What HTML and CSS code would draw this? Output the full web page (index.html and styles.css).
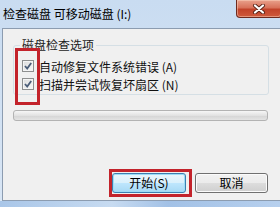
FILE: index.html
```html
<!DOCTYPE html>
<html lang="zh-CN">
<head>
<meta charset="utf-8">
<link rel="stylesheet" href="styles.css">
</head>
<body>
<div class="win">
  <div class="titlebar">
    <span class="title">检查磁盘 可移动磁盘 (I:)</span>
    <div class="close">
      <svg width="14" height="10" viewBox="0 0 14 10">
        <path d="M3 1.5 L11 8.5 M11 1.5 L3 8.5" stroke="#5a2418" stroke-width="4" stroke-linecap="round"/>
        <path d="M3 1.5 L11 8.5 M11 1.5 L3 8.5" stroke="#ffffff" stroke-width="2.2" stroke-linecap="round"/>
      </svg>
    </div>
  </div>
  <div class="client">
    <fieldset class="group">
      <legend class="legend">磁盘检查选项</legend>
      <label class="opt"><span class="cb"><svg width="10" height="10" viewBox="0 0 10 10"><path d="M2 5 L4.2 7.5 L8.2 2" fill="none" stroke="#4b5d78" stroke-width="1.8"/></svg></span>自动修复文件系统错误 (A)</label>
      <label class="opt"><span class="cb"><svg width="10" height="10" viewBox="0 0 10 10"><path d="M2 5 L4.2 7.5 L8.2 2" fill="none" stroke="#4b5d78" stroke-width="1.8"/></svg></span>扫描并尝试恢复坏扇区 (N)</label>
    </fieldset>
    <div class="progress"></div>
    <div class="buttons">
      <button class="btn btn-default">开始(S)</button>
      <button class="btn">取消</button>
    </div>
  </div>
  <div class="bottom"></div>
  <div class="mark mark-cb"></div>
  <div class="mark mark-btn"></div>
</div>
</body>
</html>
```

FILE: styles.css
```css
html, body {
  margin: 0;
  padding: 0;
}
body {
  font-family: "Noto Sans CJK SC", "Liberation Sans", sans-serif;
  font-size: 12px;
  color: #000;
}
.win {
  position: relative;
  width: 280px;
  height: 207px;
  overflow: hidden;
  background: linear-gradient(#c9dcf1, #d9e6f5);
}
.titlebar {
  height: 28px;
  display: flex;
  justify-content: space-between;
  align-items: flex-start;
}
.title {
  margin-left: 3px;
  line-height: 27px;
  font-size: 12px;
  white-space: pre;
}
.close {
  width: 46px;
  height: 18px;
  margin-right: -2px;
  box-sizing: border-box;
  border: 1px solid #6e2a1e;
  border-top: none;
  border-radius: 0 0 4px 4px;
  background: linear-gradient(#e9a18c 0%, #d8725a 45%, #c2432a 55%, #cf5a3c 100%);
  display: flex;
  align-items: center;
  justify-content: center;
  box-shadow: inset 0 0 0 1px rgba(255, 220, 200, 0.45);
}
.client {
  margin-left: 2px;
  height: 171px;
  border-top: 1px solid #8c9cb0;
  border-left: 1px solid #8c9cb0;
  border-bottom: 1px solid #8c9cb0;
  background: #f0f0f0;
  display: flex;
  flex-direction: column;
}
.group {
  margin: 8px 11px 0 10px;
  padding: 4px 8px 1px 8px;
  border: 1px solid #d5dfe5;
  border-radius: 3px;
  min-width: 0;
}
.legend {
  padding: 0 2px;
  margin-left: -2px;
  line-height: 16px;
  color: #1c1c1c;
}
.opt {
  display: flex;
  align-items: center;
  height: 18px;
  white-space: pre;
  color: #111;
}
.cb {
  width: 12px;
  height: 12px;
  box-sizing: border-box;
  border: 1px solid #8e8f8f;
  background: linear-gradient(135deg, #dcdcdc, #f8f8f8);
  margin-right: 5px;
  display: flex;
  align-items: center;
  justify-content: center;
  box-shadow: inset 0 0 0 1px #f4f4f4;
}
.progress {
  margin: 15px 12px 0 10px;
  height: 11px;
  box-sizing: border-box;
  border: 1px solid #b3b3b3;
  border-radius: 3px;
  background: linear-gradient(#f6f6f6, #e2e2e2 50%, #d4d4d4 51%, #e4e4e4);
}
.buttons {
  margin-top: 52px;
  margin-right: 12px;
  display: flex;
  justify-content: flex-end;
  gap: 9px;
}
.btn {
  width: 73px;
  height: 20px;
  padding: 0;
  font-family: "Noto Sans CJK SC", "Liberation Sans", sans-serif;
  font-size: 12px;
  line-height: 18px;
  color: #000;
  border: 1px solid #707070;
  border-radius: 3px;
  background: linear-gradient(#f2f2f2 0%, #ebebeb 50%, #dddddd 51%, #cfcfcf 100%);
  box-shadow: inset 0 0 0 1px #fbfbfb;
}
.btn-default {
  width: 74px;
  border-color: #3c7fb1;
  background: linear-gradient(#eaf6fd 0%, #d9f0fc 50%, #bee6fd 51%, #a7d9f5 100%);
  box-shadow: inset 0 0 0 1px #9edcf6;
}
.bottom {
  height: 6px;
  background: linear-gradient(90deg, #a9c6e8, #c7dbf1 40%, #a2c1e6 60%, #b7d0ee);
}
.mark {
  position: absolute;
  box-sizing: border-box;
  border: 3px solid #c3232b;
}
.mark-cb {
  left: 15px;
  top: 48px;
  width: 25px;
  height: 57px;
}
.mark-btn {
  left: 109px;
  top: 169px;
  width: 83px;
  height: 28px;
}
```
